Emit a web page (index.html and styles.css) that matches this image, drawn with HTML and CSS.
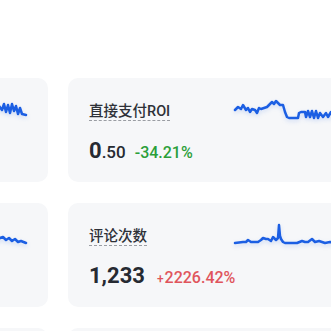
FILE: index.html
```html
<!DOCTYPE html>
<html lang="zh-CN">

<head>
    <meta charset="UTF-8">
    <meta name="viewport" content="width=device-width, initial-scale=1.0">
    <title>数据概览</title>
    <link rel="stylesheet" href="styles.css">
</head>

<body>
    <main class="board">
        <!-- row 1 -->
        <section class="card">
            <div class="card__info">
                <h3 class="card__title">支付订单数</h3>
                <div class="card__value">
                    <span class="num">128</span>
                    <span class="delta delta--up"><small>+</small>12.40%</span>
                </div>
            </div>
            <svg class="spark" viewBox="0 0 114 24">
                <path d="M2 16 L8 14 L14 17 L20 12 L26 15 L32 10 L38 13 L44 9 L50 12 L56 11 L62 14 L68 12 L74 15 L80 13 L86 8 L89 12 L91 6 L93 14 L95 7 L97 15 L99 6 L101 13 L103 8 L105 16 L107 10 L109 16 L113 17" />
            </svg>
        </section>
        <section class="card">
            <div class="card__info">
                <h3 class="card__title">直接支付ROI</h3>
                <div class="card__value">
                    <span class="num">0<small>.50</small></span>
                    <span class="delta delta--down">-34.21%</span>
                </div>
            </div>
            <svg class="spark" viewBox="0 0 114 24">
                <path d="M2 12 L5 9 L8 11 L10 7 L13 12 L15 10 L17 14 L19 11 L22 12 L24 15 L26 10 L28 11 L31 10 L34 9 L36 7 L39 4 L41 6 L43 3 L45 5 L47 7 L50 7 L52 14 L54 19 L56 20 L65 20 L66 15 L68 14 L72 14 L73 19 L75 13 L77 19 L79 13 L81 20 L83 13 L85 20 L87 15 L90 19 L93 15 L95 19 L98 14 L101 19 L105 16 L109 18 L113 17" />
            </svg>
        </section>

        <!-- row 2 -->
        <section class="card">
            <div class="card__info">
                <h3 class="card__title">点赞次数</h3>
                <div class="card__value">
                    <span class="num">3,086</span>
                    <span class="delta delta--up"><small>+</small>45.10%</span>
                </div>
            </div>
            <svg class="spark" viewBox="0 0 114 24">
                <path d="M2 20 L10 19 L16 17 L22 19 L30 18 L36 15 L42 18 L50 19 L58 18 L64 16 L70 19 L76 17 L82 19 L87 15 L90 14 L93 17 L96 15 L99 18 L102 16 L105 19 L108 18 L113 20" />
            </svg>
        </section>
        <section class="card">
            <div class="card__info">
                <h3 class="card__title">评论次数</h3>
                <div class="card__value">
                    <span class="num">1,233</span>
                    <span class="delta delta--up"><small>+</small>2226.42%</span>
                </div>
            </div>
            <svg class="spark" viewBox="0 0 114 24">
                <path d="M2 20 L10 19 L13 19 L15 17 L18 19 L25 19 L28 17 L30 15 L33 16 L35 16 L38 18 L40 14 L43 17 L45 15 L46 2 L47 13 L48 16 L50 19 L52 20 L64 20 L69 18 L72 19 L75 19 L79 16 L82 19 L86 18 L89 19 L92 20 L97 19 L103 20 L108 19 L113 20" />
            </svg>
        </section>

        <!-- row 3 -->
        <section class="card card--empty"></section>
        <section class="card card--empty"></section>
    </main>
</body>

</html>
```

FILE: styles.css
```css
:root {
    --ff-primary: Roboto, "Noto Sans CJK SC", sans-serif;
    --clr-card: #f6f7f9;
    --clr-text: #262a32;
    --clr-title: #2e3138;
    --clr-up: #e0555c;
    --clr-down: #2b9f3a;
    --clr-line: #1c5fe3;
}

* {
    margin: 0;
    padding: 0;
    box-sizing: border-box;
}

body {
    background: #fff;
    color: var(--clr-text);
    font-family: var(--ff-primary);
    overflow: hidden;
}

.board {
    display: grid;
    grid-template-columns: 300px 300px;
    gap: 21px 20px;
    margin-left: -252px;
    padding-top: 78px;
}

.card {
    display: flex;
    height: 104px;
    padding: 23px 21px 0 21px;
    background: var(--clr-card);
    border-radius: 10px;
}

.card__info {
    flex: 1;
    min-width: 0;
    white-space: nowrap;
}

.card__title {
    display: inline-block;
    font-size: 14.5px;
    font-weight: 500;
    line-height: 17px;
    color: var(--clr-title);
    border-bottom: 1px dashed #9a9da3;
}

.card__value {
    display: flex;
    align-items: baseline;
    margin-top: 16px;
}

.num {
    font-size: 22px;
    font-weight: 700;
    line-height: 28px;
}

.num small {
    font-size: 17px;
    font-weight: 500;
}

.delta {
    margin-left: 9px;
    font-size: 16px;
    font-weight: 500;
}

.delta small {
    font-size: 12px;
    margin-right: 1px;
}

.delta--up {
    color: var(--clr-up);
    margin-left: 12px;
}

.delta--down {
    color: var(--clr-down);
}

.spark {
    width: 114px;
    height: 24px;
    margin-top: -3px;
    flex-shrink: 0;
    overflow: visible;
}

.spark path {
    fill: none;
    stroke: var(--clr-line);
    stroke-width: 2.5;
    stroke-linejoin: round;
    stroke-linecap: round;
    filter: drop-shadow(0 2px 2px rgba(28, 95, 227, 0.18));
}
```
